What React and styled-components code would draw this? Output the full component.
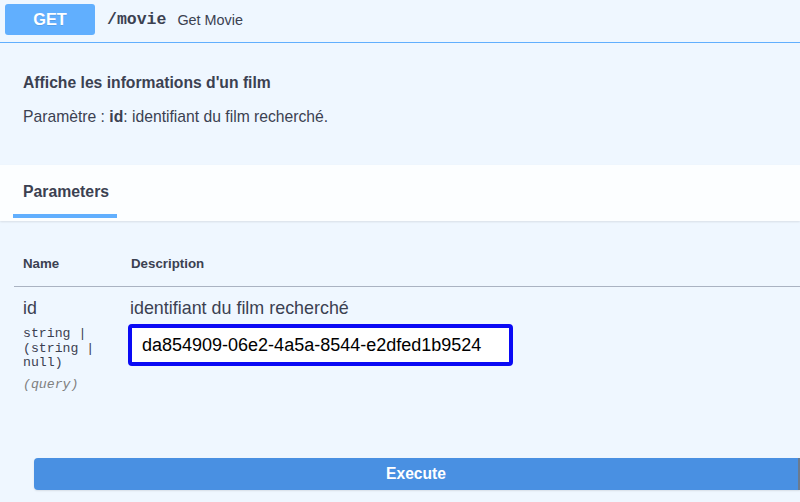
import React from "react";
import styled, { createGlobalStyle } from "styled-components";

const Global = createGlobalStyle`
  html, body {
    margin: 0;
    padding: 0;
    background: #eff7ff;
    min-height: 100%;
  }
  body {
    font-family: "Liberation Sans", Arial, sans-serif;
    color: #3b4151;
    overflow: hidden;
  }
  * { box-sizing: border-box; }
`;

const Page = styled.div`
  width: 800px;
  min-height: 502px;
  background: #eff7ff;
`;

const Summary = styled.div`
  display: flex;
  align-items: center;
  padding: 4px 5px 7px;
  border-bottom: 1px solid #61affe;
`;

const Method = styled.span`
  width: 90px;
  height: 31px;
  border-radius: 3px;
  background: #61affe;
  color: #fff;
  font-weight: 700;
  font-size: 16.3px;
  display: flex;
  align-items: center;
  justify-content: center;
  text-shadow: 0 1px 0 rgba(0, 0, 0, 0.1);
`;

const Path = styled.span`
  font-family: "Liberation Mono", "DejaVu Sans Mono", monospace;
  font-weight: 700;
  font-size: 16.5px;
  padding: 0 11px 0 12px;
  color: #3b4151;
`;

const SummaryText = styled.span`
  font-size: 14.4px;
  color: #3b4151;
`;

const Description = styled.div`
  padding: 31px 23px 39px;
`;

const Title = styled.h4`
  margin: 0 0 16px;
  font-size: 15.7px;
  line-height: 18px;
  font-weight: 700;
`;

const Para = styled.p`
  margin: 0;
  font-size: 15.7px;
  line-height: 18px;
`;

const TabBar = styled.div`
  background: rgba(255, 255, 255, 0.8);
  box-shadow: 0 1px 2px rgba(0, 0, 0, 0.1);
  padding: 18px 0 3px 13px;
`;

const Tab = styled.h4`
  display: inline-block;
  margin: 0;
  padding: 0 8px 13px 10px;
  font-size: 15.8px;
  line-height: 18px;
  font-weight: 700;
  border-bottom: 4px solid #61affe;
`;

const Table = styled.div`
  margin: 35px 0 0 14px;
  display: grid;
  grid-template-columns: 114px 1fr;
`;

const HeadCell = styled.div`
  font-size: 13.3px;
  line-height: 16px;
  font-weight: 700;
  padding: 0 0 14px ${(p) => p.$indent}px;
  border-bottom: 1px solid #aab3c2;
`;

const NameCell = styled.div`
  padding: 11px 0 0 9px;
`;

const ParamName = styled.div`
  font-size: 17.8px;
  line-height: 20px;
`;

const ParamType = styled.div`
  margin-top: 9px;
  font-family: "Liberation Mono", "DejaVu Sans Mono", monospace;
  font-size: 13.2px;
  line-height: 14.5px;
  font-weight: 400;
  width: 95px;
`;

const ParamIn = styled.div`
  margin-top: 7px;
  font-family: "Liberation Mono", "DejaVu Sans Mono", monospace;
  font-size: 13.2px;
  line-height: 14px;
  font-style: italic;
  color: #808080;
`;

const DescCell = styled.div`
  padding-top: 11px;
`;

const DescText = styled.div`
  font-size: 17.9px;
  line-height: 20px;
  padding-left: 2px;
  margin-bottom: 6px;
`;

const Input = styled.input`
  display: block;
  width: 385px;
  height: 42px;
  border: 4px solid #0a0af5;
  border-radius: 4px;
  background: #fff;
  padding: 0 10px;
  font-family: "Liberation Sans", Arial, sans-serif;
  font-size: 18px;
  color: #000;
  outline: none;
`;

const ExecuteWrap = styled.div`
  padding: 66px 0 0 34px;
`;

const ExecuteButton = styled.button`
  display: block;
  width: 100%;
  height: 32px;
  border: none;
  border-radius: 4px 0 0 4px;
  background: #4990e2;
  color: #fff;
  font-family: "Liberation Sans", Arial, sans-serif;
  font-size: 15.6px;
  font-weight: 700;
  box-shadow: 0 1px 2px rgba(0, 0, 0, 0.1);
  border-right: 2px solid #6b7b8f;
`;

export default function App() {
  return (
    <Page>
      <Global />
      <Summary>
        <Method>GET</Method>
        <Path>/movie</Path>
        <SummaryText>Get Movie</SummaryText>
      </Summary>
      <Description>
        <Title>Affiche les informations d'un film</Title>
        <Para>
          Paramètre : <b>id</b>: identifiant du film recherché.
        </Para>
      </Description>
      <TabBar>
        <Tab>Parameters</Tab>
      </TabBar>
      <Table>
        <HeadCell $indent={9}>Name</HeadCell>
        <HeadCell $indent={3}>Description</HeadCell>
        <NameCell>
          <ParamName>id</ParamName>
          <ParamType>string | (string | null)</ParamType>
          <ParamIn>(query)</ParamIn>
        </NameCell>
        <DescCell>
          <DescText>identifiant du film recherché</DescText>
          <Input defaultValue="da854909-06e2-4a5a-8544-e2dfed1b9524" />
        </DescCell>
      </Table>
      <ExecuteWrap>
        <ExecuteButton>Execute</ExecuteButton>
      </ExecuteWrap>
    </Page>
  );
}
